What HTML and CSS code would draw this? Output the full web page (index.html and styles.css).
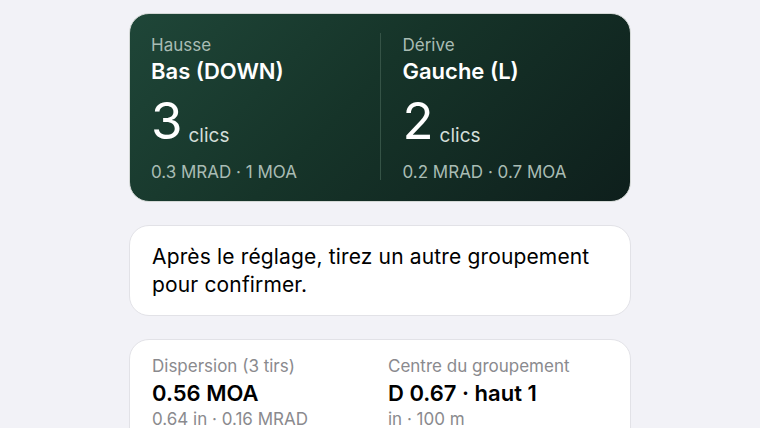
FILE: index.html
```html
<!DOCTYPE html>
<html lang="fr">
<head>
    <meta charset="UTF-8">
    <meta name="viewport" content="width=device-width, initial-scale=1.0">
    <title>Correction du zéro</title>
    <link rel="stylesheet" href="styles.css">
</head>
<body>
    <div class="container">
        <!-- Correction à appliquer sur la tourelle -->
        <div class="card card-dark">
            <div class="turret">
                <div class="label">Hausse</div>
                <div class="direction">Bas (DOWN)</div>
                <div class="clicks"><span class="count">3</span><span class="unit">clics</span></div>
                <div class="detail">0.3 MRAD · 1 MOA</div>
            </div>
            <div class="divider"></div>
            <div class="turret">
                <div class="label">Dérive</div>
                <div class="direction">Gauche (L)</div>
                <div class="clicks"><span class="count">2</span><span class="unit">clics</span></div>
                <div class="detail">0.2 MRAD · 0.7 MOA</div>
            </div>
        </div>

        <div class="card card-note">
            <p>Après le réglage, tirez un autre groupement pour confirmer.</p>
        </div>

        <!-- Statistiques du groupement -->
        <div class="card card-stats">
            <div class="stat">
                <div class="stat-label">Dispersion (3 tirs)</div>
                <div class="stat-value">0.56 MOA</div>
                <div class="stat-sub">0.64 in · 0.16 MRAD</div>
            </div>
            <div class="stat">
                <div class="stat-label">Centre du groupement</div>
                <div class="stat-value">D 0.67 · haut 1</div>
                <div class="stat-sub">in · 100 m</div>
            </div>
        </div>
    </div>
</body>
</html>
```

FILE: styles.css
```css
body {
    margin: 0;
    background-color: #f2f2f7;
    font-family: Inter, "Noto Sans", sans-serif;
    color: #000;
}
.container {
    width: 502px;
    margin: 0 auto;
    padding-top: 13px;
    display: flex;
    flex-direction: column;
    gap: 23px;
}
.card {
    border-radius: 20px;
    background-color: #fff;
    border: 1px solid #e2e2e7;
}

/* carte sombre avec les deux tourelles */
.card-dark {
    background: linear-gradient(135deg, #1f4638 0%, #163429 45%, #0e1f1c 100%);
    border-color: #d4d8d6;
    color: #fff;
    display: grid;
    grid-template-columns: 1fr 1px 1fr;
    gap: 22px;
    padding: 21px 21px 19px;
}
.divider {
    background-color: #355346;
    margin: -2px 0 2px;
}
.label {
    font-size: 17px;
    line-height: 20px;
    color: #a9bcb4;
}
.direction {
    font-size: 22px;
    font-weight: 600;
    line-height: 28px;
    margin-top: 2px;
}
.clicks {
    margin-top: 8px;
    font-size: 51px;
    line-height: 56px;
    white-space: nowrap;
}
.count {
    font-weight: 400;
}
.unit {
    font-size: 19px;
    line-height: 20px;
    color: #d3ded9;
    margin-left: 6px;
    vertical-align: -3px;
}
.detail {
    font-size: 17px;
    line-height: 20px;
    color: #a9bcb4;
    margin-top: 13px;
}

.card-note {
    padding: 17px 22px 16px;
}
.card-note p {
    margin: 0;
    font-size: 21px;
    line-height: 28px;
    letter-spacing: 0.15px;
}

.card-stats {
    display: grid;
    grid-template-columns: 1fr 1fr;
    gap: 16px;
    padding: 16px 22px 22px;
}
.stat-label {
    font-size: 17px;
    line-height: 20px;
    color: #8a8a8e;
}
.stat-value {
    font-size: 22px;
    font-weight: 600;
    line-height: 28px;
    margin-top: 3px;
}
.stat-sub {
    font-size: 17px;
    line-height: 20px;
    color: #8a8a8e;
    margin-top: 2px;
}
```
